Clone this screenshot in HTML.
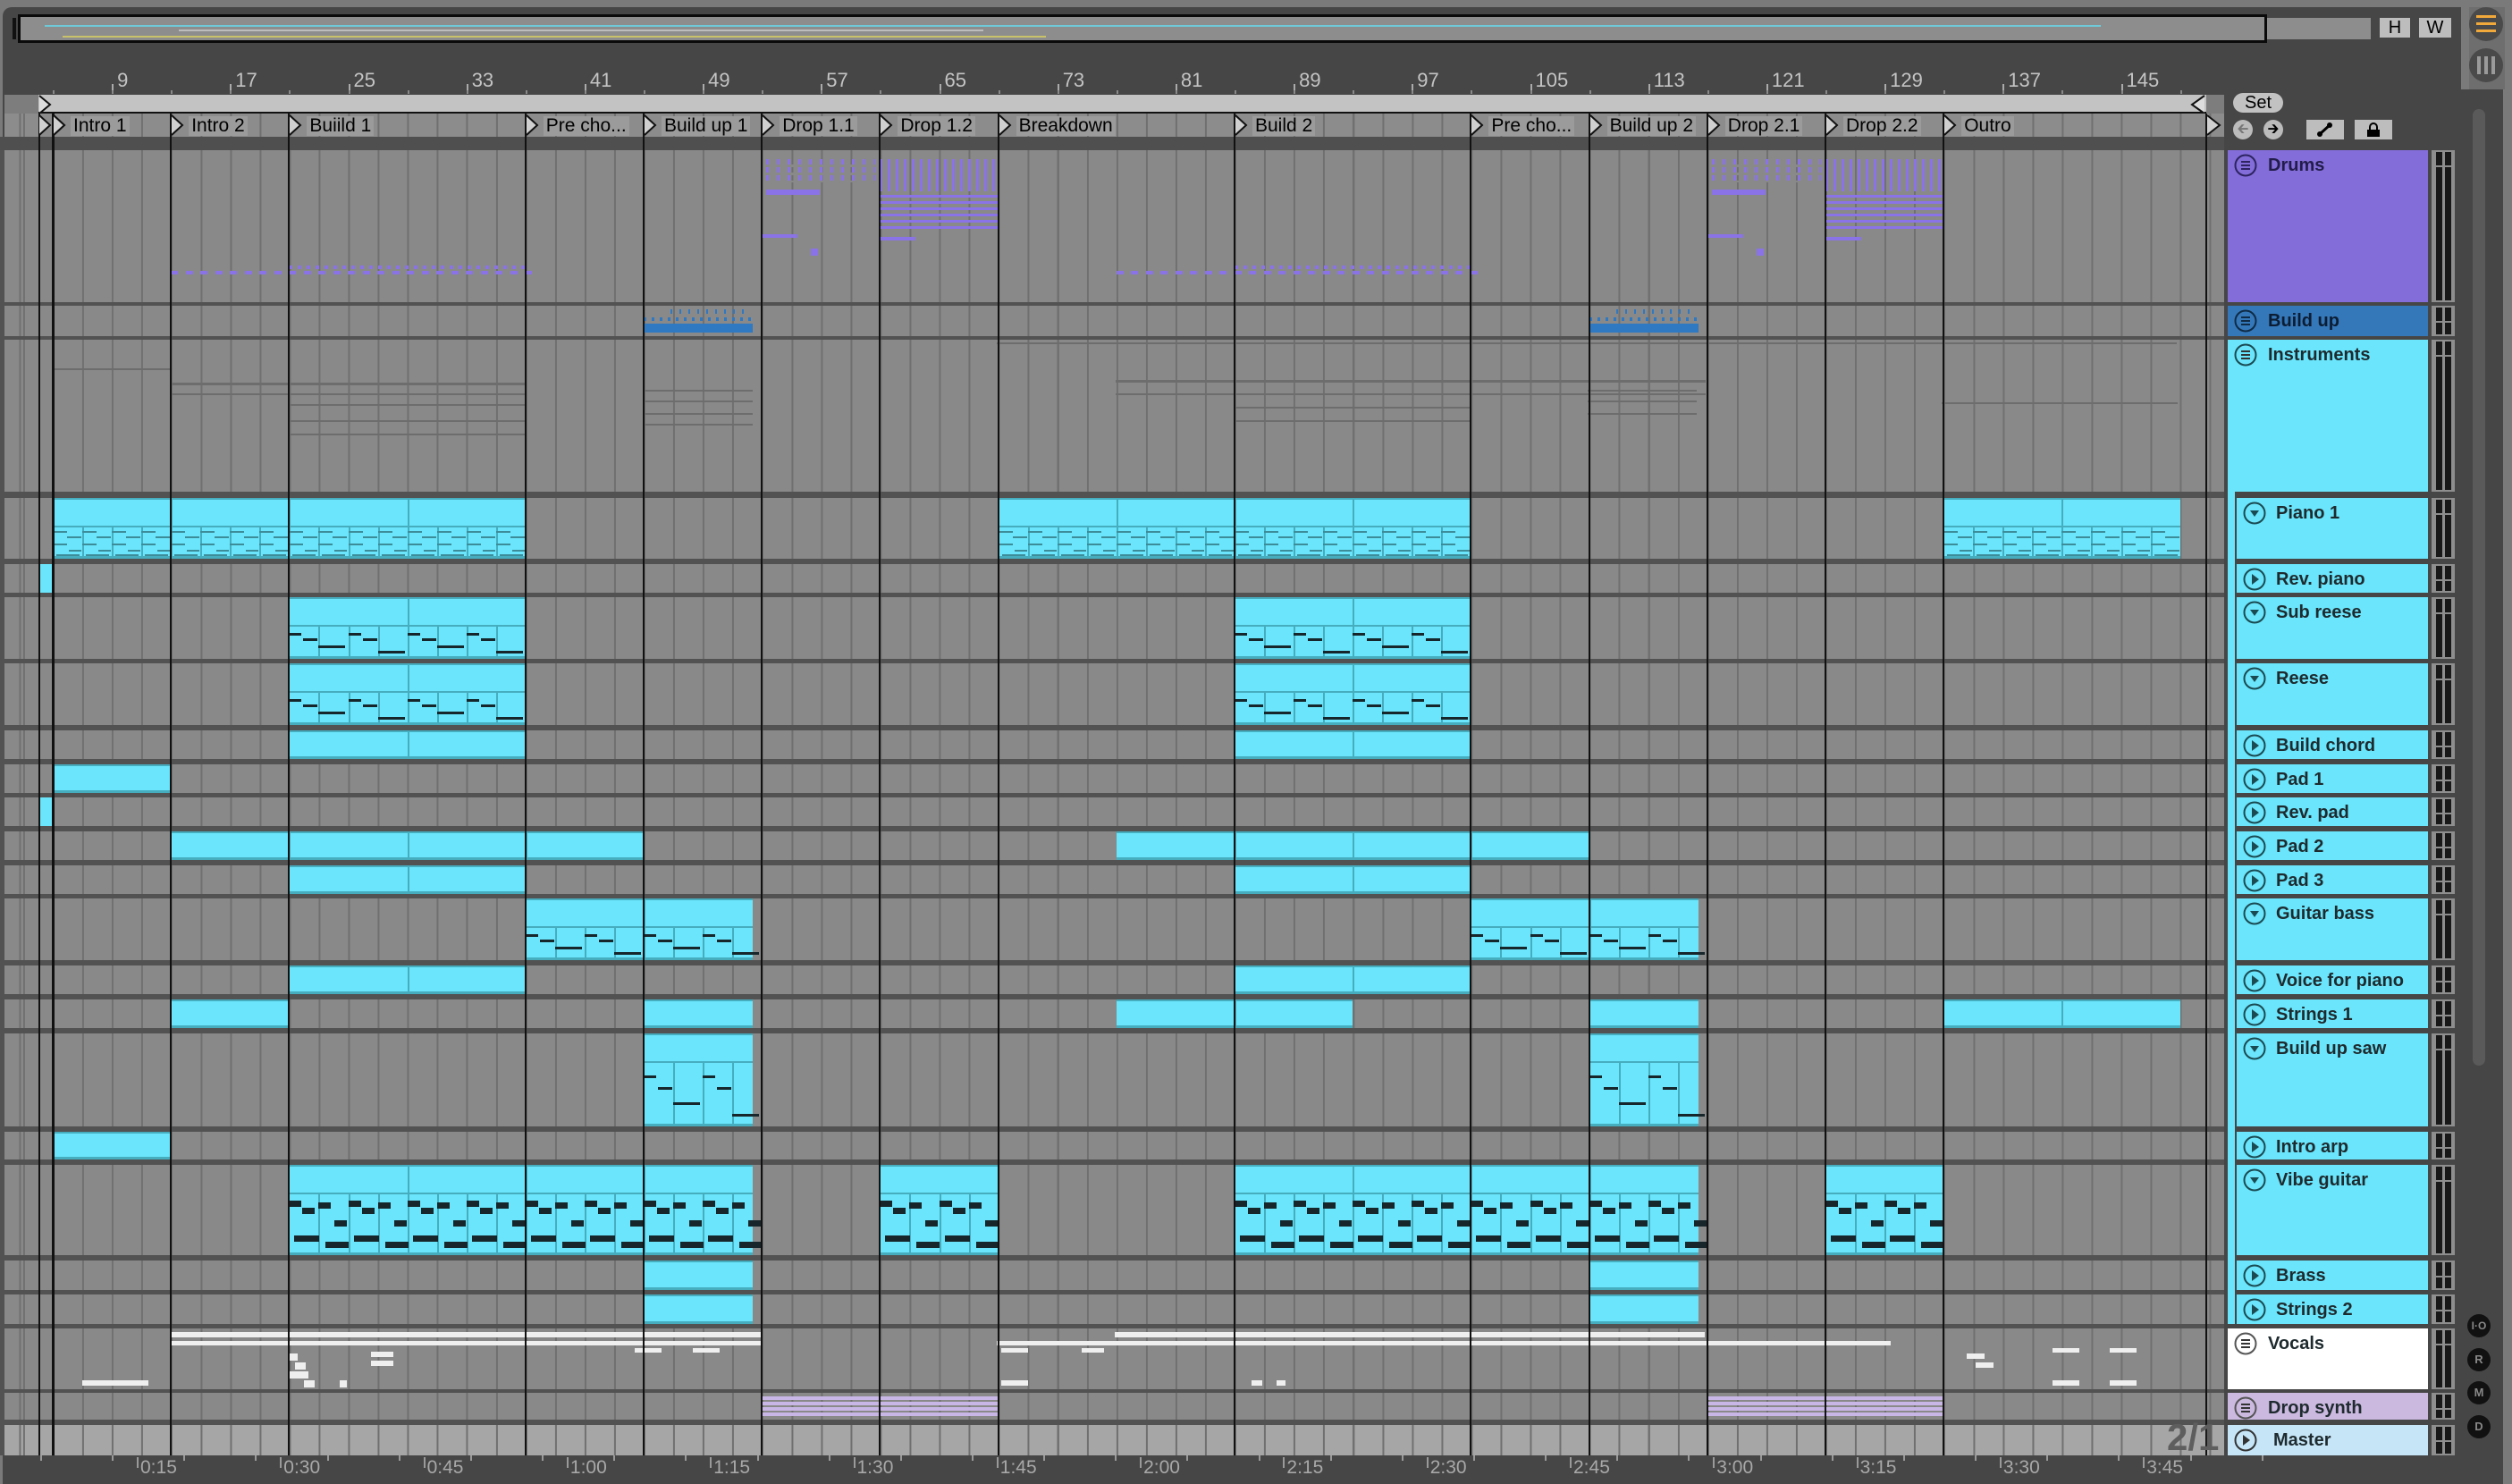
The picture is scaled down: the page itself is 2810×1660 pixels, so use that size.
<!DOCTYPE html>
<html><head><meta charset="utf-8"><style>
*{margin:0;padding:0;box-sizing:border-box}
body{width:2810px;height:1660px;background:#7a7a7a;position:relative;overflow:hidden;font-family:"Liberation Sans",sans-serif}
.a{position:absolute}
.nar{font-family:"Liberation Sans Narrow","Liberation Sans",sans-serif}
.hdr{position:absolute;font-weight:bold;font-size:20px;color:#1b2a30;white-space:nowrap}
</style></head><body>
<div class="a" style="left:3px;top:8px;width:2797px;height:1652px;background:#464646;border-radius:10px 0 0 0"></div>
<div class="a" style="left:2753px;top:0;width:57px;height:100px;background:#7a7a7a"></div>
<div class="a" style="left:2753px;top:100px;width:47px;height:1560px;background:#464646;border-radius:0 10px 0 0"></div>
<div class="a" style="left:2762px;top:8px;width:40px;height:92px;background:#6e6e6e"></div>
<div class="a" style="left:2762px;top:8px;width:38px;height:38px;border-radius:50%;background:#4a4a4a"></div>
<div class="a" style="left:2770px;top:17px;width:22px;height:3px;background:#f2a93b;box-shadow:0 8px 0 #f2a93b,0 16px 0 #f2a93b"></div>
<div class="a" style="left:2762px;top:54px;width:38px;height:38px;border-radius:50%;background:#4a4a4a"></div>
<div class="a" style="left:2771px;top:63px;width:4px;height:20px;background:#9a9a9a;box-shadow:8px 0 0 #9a9a9a,16px 0 0 #9a9a9a"></div>
<div class="a" style="left:2766px;top:122px;width:14px;height:1070px;background:#5a5a5a;border-radius:7px"></div>
<div class="a" style="left:14px;top:20px;width:4px;height:24px;background:#111"></div>
<div class="a" style="left:20px;top:16px;width:2516px;height:32px;border:3px solid #0a0a0a;background:#8d8d8d"></div>
<div class="a" style="left:50px;top:28px;width:2300px;height:2px;background:#6fc9d8"></div>
<div class="a" style="left:70px;top:40px;width:1100px;height:2px;background:#c9c26a"></div>
<div class="a" style="left:200px;top:33px;width:900px;height:2px;background:#bdbdbd"></div>
<div class="a" style="left:2536px;top:20px;width:116px;height:24px;background:#8d8d8d"></div>
<div class="a" style="left:2662px;top:20px;width:34px;height:22px;background:#bdbdbd;font-size:20px;text-align:center;line-height:22px">H</div>
<div class="a" style="left:2706px;top:20px;width:36px;height:22px;background:#bdbdbd;font-size:20px;text-align:center;line-height:22px">W</div>
<div class="a" style="left:5px;top:106px;width:2483px;height:48px;background:#7d7d7d"></div>
<div class="a" style="left:43px;top:106px;width:2425px;height:21px;background:#c3c3c3;border-bottom:2px solid #111"></div>
<svg class="a" style="left:43px;top:106px" width="16" height="22"><path d="M1 1 L13 11 L1 21" fill="#ddd" stroke="#111" stroke-width="2"/></svg>
<svg class="a" style="left:2448px;top:106px" width="20" height="22"><path d="M18 1 L4 11 L18 21" fill="#ddd" stroke="#111" stroke-width="2"/></svg>
<div class="a" style="left:0;top:153px;width:2488px;height:15px;background:#4f4f4f"></div>
<div class="a" style="left:2498px;top:104px;width:56px;height:22px;border-radius:11px;background:#c2c2c2;font-size:20px;text-align:center;line-height:22px">Set</div>
<div class="a" style="left:2498px;top:134px;width:22px;height:22px;border-radius:50%;background:#bbb;font-size:16px;text-align:center;line-height:22px;color:#777">&#129136;</div>
<div class="a" style="left:2532px;top:134px;width:22px;height:22px;border-radius:50%;background:#bbb;font-size:16px;text-align:center;line-height:22px;color:#000">&#129138;</div>
<div class="a" style="left:2580px;top:134px;width:42px;height:22px;background:#bdbdbd"></div>
<svg class="a" style="left:2592px;top:137px" width="18" height="16"><path d="M3 13 L14 3" stroke="#000" stroke-width="3"/><circle cx="3" cy="13" r="3"/><circle cx="14" cy="3" r="3"/></svg>
<div class="a" style="left:2634px;top:134px;width:42px;height:22px;background:#bdbdbd"></div>
<svg class="a" style="left:2647px;top:137px" width="16" height="16"><path d="M4 8 V5 a4 4 0 0 1 8 0 V8" fill="none" stroke="#000" stroke-width="2"/><rect x="1" y="8" width="14" height="8"/></svg>
<div id="g"></div>
<div class="a" style="left:2760px;top:1470px;width:26px;height:26px;border-radius:50%;background:#111;color:#888;font-size:12px;text-align:center;line-height:26px;font-weight:bold">I·O</div>
<div class="a" style="left:2760px;top:1508px;width:26px;height:26px;border-radius:50%;background:#111;color:#888;font-size:13px;text-align:center;line-height:26px;font-weight:bold">R</div>
<div class="a" style="left:2760px;top:1545px;width:26px;height:26px;border-radius:50%;background:#111;color:#888;font-size:13px;text-align:center;line-height:26px;font-weight:bold">M</div>
<div class="a" style="left:2760px;top:1583px;width:26px;height:26px;border-radius:50%;background:#111;color:#888;font-size:13px;text-align:center;line-height:26px;font-weight:bold">D</div>
<script>
const G=document.getElementById('g');let H='';
const S=i=>59+132.2*i;
function R(x,y,w,h,c,ex){H+=`<div class="a" style="left:${x}px;top:${y}px;width:${w}px;height:${h}px;background:${c};${ex||''}"></div>`}
function T(x,y,t,st){H+=`<div class="a" style="left:${x}px;top:${y}px;${st}">${t}</div>`}
const grid='background-image:repeating-linear-gradient(90deg,#707070 0 2px,transparent 2px 33.05px);background-position:20.95px 0;';
for(let n=9;n<=145;n+=8){const x=59+(n-5)*16.525;R(x,94,2,10,'#aaa');T(x+6,77,n,'font-size:22px;color:#c4c4c4;font-family:"Liberation Sans Narrow","Liberation Sans",sans-serif');}
for(let n=5;n<=149;n+=4){R(59+(n-5)*16.525,101,2,4,'#8a8a8a');}
R(5,127,2483,26,'#8c8c8c',grid);
const secs=[[0,'Intro 1'],[1,'Intro 2'],[2,'Buiild 1'],[4,'Pre cho...'],[5,'Build up 1'],[6,'Drop 1.1'],[7,'Drop 1.2'],[8,'Breakdown'],[10,'Build 2'],[12,'Pre cho...'],[13,'Build up 2'],[14,'Drop 2.1'],[15,'Drop 2.2'],[16,'Outro']];
const rows=[['Drums',168,170,'#836dd9','g'],['Build up',342,34,'#3578ba','g'],['Instruments',380,170,'#6ae5fb','g'],['Piano 1',557,68,0,'f'],['Rev. piano',631,32,0,'p'],['Sub reese',668,69,0,'f'],['Reese',742,69,0,'f'],['Build chord',817,32,0,'p'],['Pad 1',855,32,0,'p'],['Rev. pad',892,32,0,'p'],['Pad 2',930,32,0,'p'],['Pad 3',968,32,0,'p'],['Guitar bass',1005,69,0,'f'],['Voice for piano',1080,32,0,'p'],['Strings 1',1118,32,0,'p'],['Build up saw',1156,104,0,'f'],['Intro arp',1266,31,0,'p'],['Vibe guitar',1303,101,0,'f'],['Brass',1410,33,0,'p'],['Strings 2',1448,33,0,'p'],['Vocals',1486,68,'#ffffff','g'],['Drop synth',1558,30,'#cbb9e0','g'],['Master',1594,34,'#c6e6f8','m']];
R(0,168,2488,1460,'#525252');R(2488,168,4,1460,'#464646');
rows.forEach(r=>{R(5,r[1],2483,r[2],r[0]=='Master'?'#a6a6a6':'#898989',grid);});
const C='#6ae5fb',CB='#46adbf';
const clips={'Piano 1':[[0,4],[8,12],[16,18]],'Sub reese':[[2,4],[10,12]],'Reese':[[2,4],[10,12]],'Build chord':[[2,4],[10,12]],'Pad 3':[[2,4],[10,12]],'Voice for piano':[[2,4],[10,12]],'Pad 1':[[0,1]],'Intro arp':[[0,1]],'Pad 2':[[1,5],[9,13]],'Guitar bass':[[4,5.925],[12,13.925]],'Strings 1':[[1,2],[5,5.925],[9,11],[13,13.925],[16,18]],'Build up saw':[[5,5.925],[13,13.925]],'Brass':[[5,5.925],[13,13.925]],'Strings 2':[[5,5.925],[13,13.925]],'Vibe guitar':[[2,5.925],[7,8],[10,13.925],[15,16]]};
rows.forEach(r=>{const cl=clips[r[0]];if(!cl)return;const y=r[1],h=r[2];
 cl.forEach(([a,b])=>{const x=S(a),w=S(b)-S(a);R(x,y,w,h,C,`box-shadow:inset 0 2px 0 ${CB},inset 0 -3px 0 ${CB};`);
  for(let k=Math.ceil(a+0.01);k<b;k++)R(S(k),y,2,h,CB);
  if(h>60){R(x,y+31,w,2,CB);
   for(let xx=x+33.05;xx<x+w-4;xx+=33.05)R(xx,y+33,2,h-36,CB);
   const na=y+34,nh=h-38;let cells=Math.round(w/33.05);
   for(let c=0;c<cells;c++){const cx=x+c*33.05;
    if(r[0]=='Vibe guitar'){
      const q=c%2==0?[[0,.1,14,7],[15,.22,14,7],[6,.72,28,7]]:[[0,.12,14,7],[18,.44,14,7],[8,.82,26,7]];
      q.forEach(([dx,fy,ww,hh])=>R(cx+dx,na+fy*nh,ww,hh,'#17262b'));}
    else if(r[0]=='Piano 1'){[[0,.1,16],[16,.3,16],[0,.55,16],[18,.8,14],[4,.95,26]].forEach(([dx,fy,ww])=>R(cx+dx,na+fy*nh,ww,2,'#3d8c99'));}
    else{const q=c%2==0?[[0,.2,14],[16,.4,16]]:[[0,.65,30]];if(c%4==3)q[0]=[0,.85,30];q.forEach(([dx,fy,ww])=>R(cx+dx,na+fy*nh,ww,3,'#16262b'));}
   }}
 });});
R(45,631,14,32,C);R(45,892,14,32,C);
const P='#8a73e6';
for(let x=S(1);x<S(4);x+=16.5)R(x,303,8,4,P);
for(let x=S(2);x<S(4);x+=10)R(x,297,4,4,P);
for(let x=S(9);x<S(12);x+=16.5)R(x,303,8,4,P);
for(let x=S(10);x<S(12);x+=10)R(x,297,4,4,P);
[[6,7],[14,15]].forEach(([a,b])=>{R(S(a)+5,178,S(b)-S(a)-10,26,'',`background:repeating-linear-gradient(180deg,transparent 0 6px,#898989 6px 9px),repeating-linear-gradient(90deg,${P} 0 3px,transparent 3px 12px)`);R(S(a)+5,212,60,6,P);R(S(a),262,40,4,P);R(S(a)+55,278,8,8,P);});
[[7,8],[15,16]].forEach(([a,b])=>{R(S(a),178,S(b)-S(a),36,'',`background:repeating-linear-gradient(90deg,${P} 0 3px,transparent 3px 9px)`);R(S(a),218,S(b)-S(a),40,'',`background:repeating-linear-gradient(180deg,${P} 0 3px,transparent 3px 7px)`);R(S(a),265,40,4,P);});
[5,13].forEach(a=>{R(S(a),362,122,10,'#2f78c2');R(S(a),355,122,4,'',`background:repeating-linear-gradient(90deg,#2f78c2 0 3px,transparent 3px 9px)`);R(S(a)+30,346,90,5,'',`background:repeating-linear-gradient(90deg,#2f78c2 0 2px,transparent 2px 10px)`);});
const L='#6d6d6d';
R(59,412,132,2,L);R(191,428,396,3,L);R(191,440,396,2,L);R(323,452,264,2,L);R(323,470,264,2,L);R(323,485,264,2,L);
R(720,436,122,2,L);R(720,448,122,2,L);R(720,462,122,2,L);R(720,474,122,2,L);
R(1115,383,1320,2,L);R(1248,425,660,3,L);R(1248,440,660,2,L);R(1380,455,264,2,L);R(1380,470,264,2,L);
R(1776,436,122,2,L);R(1776,448,122,2,L);R(1776,462,122,2,L);R(2172,450,264,2,L);
const W='#efefef';
R(191,1490,660,6,W);R(191,1500,660,5,W);R(710,1508,30,5,W);R(775,1508,30,5,W);R(710,1500,20,5,W);
R(323,1514,10,8,W);R(330,1524,12,8,W);R(323,1534,22,8,W);R(340,1544,12,8,W);R(380,1544,8,8,W);R(415,1512,25,6,W);R(415,1522,25,6,W);
R(92,1544,74,6,W);
R(1247,1490,660,6,W);R(1115,1500,1000,5,W);R(1120,1508,30,5,W);R(1210,1508,25,5,W);R(1400,1544,12,6,W);R(1428,1544,10,6,W);R(1120,1544,30,6,W);
R(2200,1514,20,6,W);R(2210,1524,20,6,W);R(2296,1508,30,5,W);R(2360,1508,30,5,W);R(2296,1544,30,6,W);R(2360,1544,30,6,W);
[[6,8],[14,16]].forEach(([a,b])=>R(S(a),1562,S(b)-S(a),22,'',`background:repeating-linear-gradient(180deg,#c8b6e6 0 4px,transparent 4px 6px)`));
[43,59].forEach(x=>R(x,127,2,1501,'#111'));
secs.forEach(([i])=>R(S(i)-1,127,2,1501,'#111'));R(2467,127,2,1501,'#111');
[43,59].forEach(x=>{H+=`<svg class="a" style="left:${x}px;top:128px" width="16" height="24"><path d="M1 1 L13 12 L1 23" fill="#d0d0d0" stroke="#111" stroke-width="2"/></svg>`;});
secs.forEach(([i,t])=>{const x=S(i);H+=`<svg class="a" style="left:${x}px;top:128px" width="16" height="24"><path d="M1 1 L13 12 L1 23" fill="#d0d0d0" stroke="#111" stroke-width="2"/></svg>`;
 H+=`<div class="a nar" style="left:${x+20}px;top:130px;height:22px;padding:0 3px;background:#9b9b9b;font-size:21px;line-height:22px;color:#000">${t}</div>`;});
H+=`<svg class="a" style="left:2468px;top:128px" width="18" height="24"><path d="M1 1 L15 12 L1 23" fill="#d0d0d0" stroke="#111" stroke-width="2"/></svg>`;
T(2424,1584,'2/1','font-size:42px;font-weight:bold;color:#5e5e5e');
const tl=['0:15','0:30','0:45','1:00','1:15','1:30','1:45','2:00','2:15','2:30','2:45','3:00','3:15','3:30','3:45'];
tl.forEach((t,i)=>{const x=153+i*160.3;R(x,1630,2,12,'#9a9a9a');T(x+4,1630,t,'font-size:21px;color:#a8a8a8;font-family:"Liberation Sans Narrow","Liberation Sans",sans-serif');});
for(let i=0;i<32;i++)R(45+i*80.15,1628,2,6,'#9a9a9a');
R(2492,550,8,931,'#6ae5fb');
rows.forEach(r=>{const [n,y,h,c,t]=r;const child=!c;const x=child?2502:2492,w=child?214:224;
 R(x,y,w,h,child?'#6ae5fb':c);
 const icx=child?2509:2499;
 let ic='';
 if(t=='g')ic=`<svg class="a" style="left:${icx}px;top:${y+4}px" width="26" height="26"><circle cx="13" cy="13" r="11.5" fill="none" stroke="${n=='Drums'?'#2d2460':n=='Build up'?'#0f2b45':n=='Instruments'?'#1b4a52':'#555'}" stroke-width="2"/><path d="M8 9H18M8 13H18M8 17H18" stroke="${n=='Drums'?'#2d2460':n=='Build up'?'#0f2b45':'#333'}" stroke-width="2"/></svg>`;
 else if(t=='f')ic=`<svg class="a" style="left:${icx}px;top:${y+4}px" width="26" height="26"><circle cx="13" cy="13" r="11.5" fill="none" stroke="#1b4a52" stroke-width="2"/><path d="M8 10L18 10L13 17Z" fill="#1b4a52"/></svg>`;
 else ic=`<svg class="a" style="left:${icx}px;top:${y+4}px" width="26" height="26"><circle cx="13" cy="13" r="11.5" fill="none" stroke="${t=='m'?'#333':'#1b4a52'}" stroke-width="2"/><path d="M10 7L18 13L10 19Z" fill="${t=='m'?'#333':'#1b4a52'}"/></svg>`;
 H+=ic;
 H+=`<div class="hdr" style="left:${child?2546:(t=='m'?2543:2537)}px;top:${y+6}px;color:${n=='Drums'?'#221c4a':n=='Build up'?'#0c1d33':'#1e2a2e'}">${n}</div>`;
 R(2720,y,26,h,'#8e8e8e');R(2725,y+2,7,h-4,'#181818');R(2735,y+2,7,h-4,'#181818');R(2725,y+17,17,2,'#8e8e8e');
});
G.innerHTML=H;
</script>
</body></html>
